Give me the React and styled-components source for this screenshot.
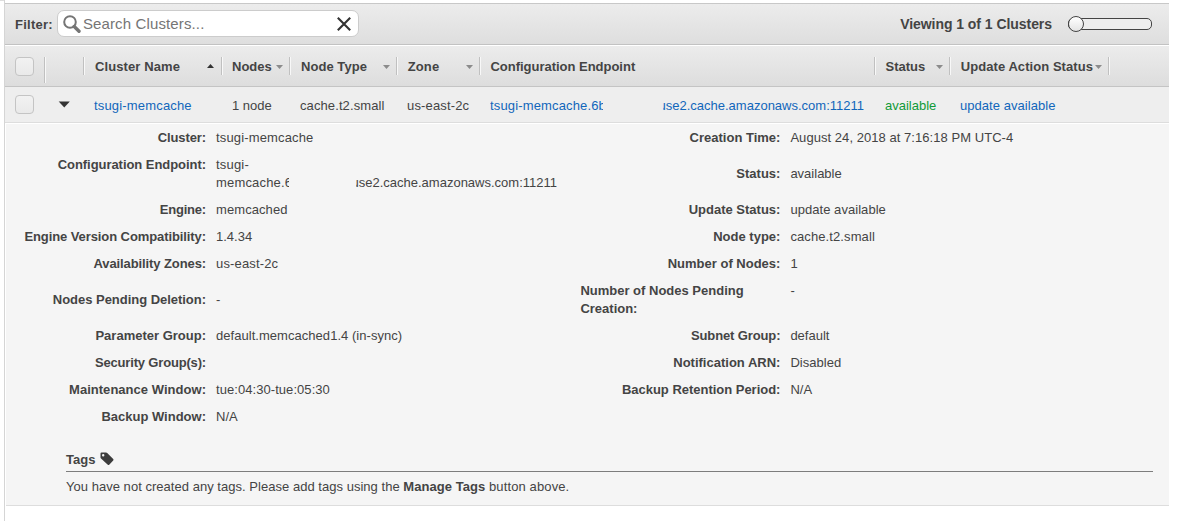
import React from "react";
import styled, { createGlobalStyle } from "styled-components";

const Global = createGlobalStyle`
  * { box-sizing: border-box; }
  body {
    margin: 0;
    background: #fff;
    color: #444;
    font: 13px/18px "Liberation Sans", Arial, sans-serif;
    overflow: hidden;
  }
`;

const Page = styled.div`
  display: flex;
  width: 1181px;
  height: 521px;
`;

const Gutter = styled.div`
  width: 4px;
  border-top: 1px solid #ddd;
`;

const Panel = styled.main`
  width: 1165px;
  padding-top: 3px;
  border-left: 1px solid #d5d5d5;
`;

const Text = styled.span`
  white-space: pre;
  letter-spacing: ${(p) => p.$ls || 0}px;
  font-size: ${(p) => p.$size || "inherit"};
  font-weight: ${(p) => (p.$bold ? 700 : 400)};
  color: ${(p) => p.$color || "inherit"};
`;

const FilterLabel = styled(Text)`
  padding-top: 2px;
`;

const Toolbar = styled.header`
  display: flex;
  align-items: center;
  height: 42px;
  padding: 0 17px 0 10px;
  border-top: 1px solid #c8c8c8;
  border-bottom: 1px solid #c2c2c2;
  background: linear-gradient(#ececec, #dedede);
`;

const SearchBox = styled.div`
  display: flex;
  align-items: center;
  width: 302px;
  height: 27px;
  margin: 0 auto 1px 4px;
  padding: 0 7px 0 5px;
  border: 1px solid #ccc;
  border-radius: 7px;
  background: #fff;
  color: #757575;
  font-size: 15px;
`;

const Placeholder = styled(Text)`
  margin: 0 auto 0 2px;
`;

const Slider = styled.div`
  display: flex;
  align-items: center;
  width: 84px;
  height: 12px;
  margin-left: 16px;
  border: 1px solid #444;
  border-radius: 5px;
  background: #eee;
`;

const Knob = styled.div`
  flex: none;
  width: 16px;
  height: 16px;
  margin-left: -1px;
  border: 1px solid #444;
  border-radius: 8px;
  background: linear-gradient(#fff, #e4e4e4);
`;

const GridRow = styled.div`
  display: grid;
  grid-template-columns: 39px 39px 138px 68px 107px 83px 395px 75px 159px 1fr;
  align-items: center;
`;

const HeadRow = styled(GridRow)`
  height: 42px;
  border-top: 1px solid #fff;
  border-bottom: 1px solid #c4c4c4;
  background: linear-gradient(#ececec, #dddddd);
`;

const BodyRow = styled(GridRow)`
  height: 36px;
  border-bottom: 1px solid #ddd;
  background: #eee;
`;

const HeadCell = styled.div`
  display: flex;
  align-items: center;
  justify-content: space-between;
  height: ${(p) => (p.$tall ? 26 : 18)}px;
  margin-top: ${(p) => (p.$tall ? 8 : 0)}px;
  padding: ${(p) => (p.$tall ? 0 : 2)}px 6px 0 ${(p) => p.$inset || 10}px;
  border-left: 1px solid #c0c0c0;
  box-shadow: inset 1px 0 #f8f8f8;
`;

const Cell = styled.div`
  padding: ${(p) => (p.$center ? 0 : "2px 0 0 11px")};
  display: flex;
  justify-content: ${(p) => (p.$center ? "center" : "flex-start")};
`;

const Checkbox = styled.div`
  width: 19px;
  height: 19px;
  margin-left: 10px;
  border: 1px solid #c4c4c4;
  border-radius: 4px;
  background: linear-gradient(#f2f2f2, #e9e9e9);
`;

const Gap = styled.span`
  display: inline-block;
  width: ${(p) => p.$w}px;
`;

const Clip = styled(Text)`
  display: inline-flex;
  justify-content: ${(p) => (p.$end ? "flex-end" : "flex-start")};
  width: ${(p) => p.$w}px;
  overflow: hidden;
`;

const Details = styled.section`
  height: 383px;
  margin-left: 1px;
  padding: 5px 16px 0 0;
  border-top: 1px solid #fff;
  border-bottom: 1px solid #ddd;
  background: #f5f5f5;
`;

const Columns = styled.div`
  display: grid;
  grid-template-columns: 574.4px 1fr;
`;

const List = styled.dl`
  display: grid;
  grid-template-columns: 200px 1fr;
  grid-template-rows: 18px 36px 18px 18px 18px 36px 18px 18px 18px 18px;
  gap: 9px 10px;
  margin: 0;
`;

const Term = styled.dt`
  justify-self: ${(p) => (p.$wrapped ? "start" : "end")};
  align-self: ${(p) => p.$align || "center"};
`;

const Value = styled.dd`
  margin: 0;
  align-self: ${(p) => p.$align || "center"};
`;

const Line = styled.div`
  display: flex;
  height: 18px;
`;

const Tags = styled.div`
  margin: 24px 0 0 60px;
`;

const TagsTitle = styled.div`
  display: flex;
  align-items: center;
  gap: 5px;
  height: 22px;
  padding-bottom: 2px;
  margin-bottom: 6px;
  border-bottom: 1px solid #7d7d7d;

  svg { margin-bottom: 2px; }
`;

const SortIcon = styled.svg`
  margin: ${(p) => (p.$up ? "0 1px 3px 0" : 0)};
`;

const Arrow = ({ up }) => (
  <SortIcon $up={up} width="7" height="4" viewBox="0 0 7 4">
    <path d={up ? "M0 4 3.5 0 7 4z" : "M0 0h7L3.5 4z"} fill={up ? "#333" : "#8b8b8b"} />
  </SortIcon>
);

const SearchIcon = () => (
  <svg width="18" height="18" viewBox="0 0 18 18" fill="none" stroke="#757575">
    <circle cx="7" cy="7" r="5.8" strokeWidth="2" />
    <path d="M11.2 11.5 16 16.2" strokeWidth="3.4" strokeLinecap="round" />
  </svg>
);

const ClearIcon = () => (
  <svg width="14" height="14" viewBox="0 0 14 14" stroke="#333" strokeWidth="2.1">
    <path d="M0.8 0.8 13.2 13.2M13.2 0.8 0.8 13.2" />
  </svg>
);

const ExpandIcon = () => (
  <svg width="12" height="7" viewBox="0 0 12 7">
    <path d="M0.7 0.5h11.1L6.25 6.5z" fill="#333" />
  </svg>
);

const TagIcon = () => (
  <svg width="14" height="14" viewBox="0 0 14 14" fill="#3c3c3c">
    <path
      fillRule="evenodd"
      d="M0.5 1.5Q0.5 0.5 1.5 0.5H6Q6.7 0.5 7.2 1L13.2 7Q13.9 7.7 13.2 8.4L9.2 12.8Q8.5 13.4 7.8 12.8L1 6.6Q0.5 6 0.5 5.4ZM3.2 2a1.2 1.2 0 1 0 0 2.4a1.2 1.2 0 1 0 0-2.4Z"
    />
  </svg>
);

const BLUE = "#1166bb";

const headings = [
  { label: "Cluster Name", arrow: "up", ls: 0.1, inset: 11 },
  { label: "Nodes", arrow: "down" },
  { label: "Node Type", arrow: "down", inset: 11, ls: 0.05 },
  { label: "Zone", arrow: "down", inset: 10.7, ls: 0.15 },
  { label: "Configuration Endpoint", inset: 10.5, ls: -0.02 },
  { label: "Status", arrow: "down", inset: 10.5 },
  { label: "Update Action Status", arrow: "down", inset: 10.8, ls: 0.06 },
];

const left = [
  { term: "Cluster:", value: "tsugi-memcache", vls: 0.15, tls: -0.1 },
  { term: "Configuration Endpoint:", endpoint: true, termAlign: "start", tls: -0.05 },
  { term: "Engine:", value: "memcached", vls: 0.08, tls: -0.2 },
  { term: "Engine Version Compatibility:", value: "1.4.34", tls: -0.09 },
  { term: "Availability Zones:", value: "us-east-2c", vls: 0.15, tls: -0.1 },
  { term: "Nodes Pending Deletion:", value: "-", tls: -0.03 },
  { term: "Parameter Group:", value: "default.memcached1.4 (in-sync)", vls: 0.04 },
  { term: "Security Group(s):", value: "", tls: -0.17 },
  { term: "Maintenance Window:", value: "tue:04:30-tue:05:30", vls: 0.06, tls: 0.03 },
  { term: "Backup Window:", value: "N/A" },
];

const right = [
  { term: "Creation Time:", value: "August 24, 2018 at 7:16:18 PM UTC-4", vls: 0.05 },
  { term: "Status:", value: "available" },
  { term: "Update Status:", value: "update available", vls: 0.05 },
  { term: "Node type:", value: "cache.t2.small", vls: 0.1 },
  { term: "Number of Nodes:", value: "1" },
  { term: "Number of Nodes Pending\nCreation:", value: "-", valueAlign: "start", wrapped: true },
  { term: "Subnet Group:", value: "default", tls: -0.12 },
  { term: "Notification ARN:", value: "Disabled", vls: 0.04 },
  { term: "Backup Retention Period:", value: "N/A", tls: -0.02 },
];

const DetailList = ({ items }) => (
  <List>
    {items.map((it) => (
      <React.Fragment key={it.term}>
        <Term $align={it.termAlign} $wrapped={it.wrapped}>
          <Text $bold $ls={it.tls}>{it.term}</Text>
        </Term>
        <Value $align={it.valueAlign}>
          {it.endpoint ? (
            <>
              <Line><Text $ls={0.2}>tsugi-</Text></Line>
              <Line>
                <Clip $w={73} $ls={0.18}>memcache.6</Clip>
                <Gap $w={67} />
                <Clip $w={201} $end>use2.cache.amazonaws.com:11211</Clip>
              </Line>
            </>
          ) : (
            <Text $ls={it.vls}>{it.value}</Text>
          )}
        </Value>
      </React.Fragment>
    ))}
  </List>
);

export default function App() {
  return (
    <Page>
      <Global />
      <Gutter />
      <Panel>
        <Toolbar>
          <FilterLabel $bold $ls={0.25}>Filter:</FilterLabel>
          <SearchBox>
            <SearchIcon />
            <Placeholder $ls={0.13}>Search Clusters...</Placeholder>
            <ClearIcon />
          </SearchBox>
          <Text $bold $size="14px" $ls={-0.05}>Viewing 1 of 1 Clusters</Text>
          <Slider><Knob /></Slider>
        </Toolbar>
        <HeadRow>
          <Checkbox />
          <HeadCell $tall />
          {headings.map((h) => (
            <HeadCell key={h.label} $inset={h.inset}>
              <Text $bold $ls={h.ls}>{h.label}</Text>
              {h.arrow && <Arrow up={h.arrow === "up"} />}
            </HeadCell>
          ))}
          <HeadCell />
        </HeadRow>
        <BodyRow>
          <Checkbox />
          <Cell $center><ExpandIcon /></Cell>
          <Cell><Text $color={BLUE} $ls={0.17}>tsugi-memcache</Text></Cell>
          <Cell><Text>1 node</Text></Cell>
          <Cell><Text $ls={0.1}>cache.t2.small</Text></Cell>
          <Cell><Text $ls={0.15}>us-east-2c</Text></Cell>
          <Cell>
            <Clip $color={BLUE} $w={113} $ls={0.15}>tsugi-memcache.6b</Clip>
            <Gap $w={60} />
            <Clip $color={BLUE} $w={201} $end>use2.cache.amazonaws.com:11211</Clip>
          </Cell>
          <Cell><Text $color="#109a38">available</Text></Cell>
          <Cell><Text $color={BLUE} $ls={0.05}>update available</Text></Cell>
        </BodyRow>
        <Details>
          <Columns>
            <DetailList items={left} />
            <DetailList items={right} />
          </Columns>
          <Tags>
            <TagsTitle>
              <Text $bold>Tags</Text>
              <TagIcon />
            </TagsTitle>
            <Text $ls={0.03}>You have not created any tags. Please add tags using the </Text>
            <Text $bold $ls={0.05}>Manage Tags</Text>
            <Text $ls={0.12}> button above.</Text>
          </Tags>
        </Details>
      </Panel>
    </Page>
  );
}
